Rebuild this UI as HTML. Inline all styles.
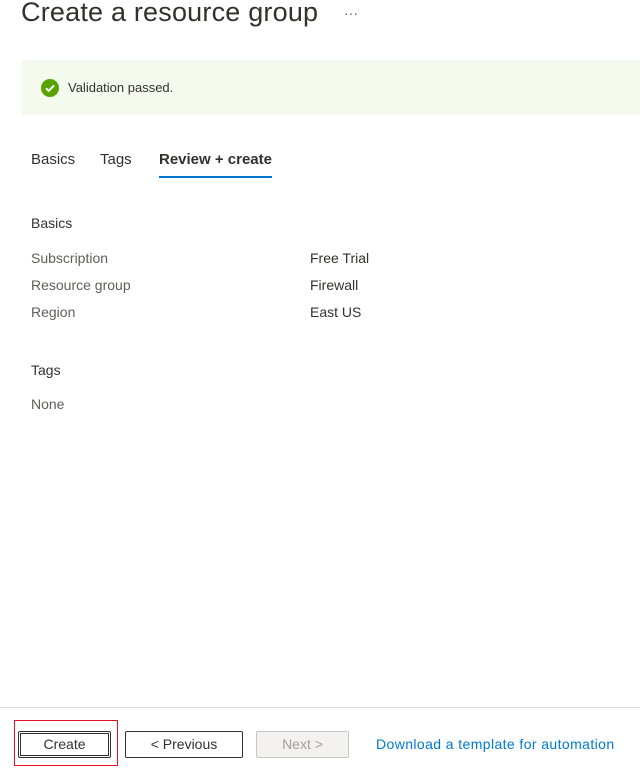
<!DOCTYPE html>
<html><head><style>
body{margin:0;width:640px;height:768px;background:#fff;font-family:"Liberation Sans",sans-serif;color:#323130;position:relative;overflow:hidden}
.a{position:absolute;white-space:nowrap}
.t{font-size:14px}
.g{color:#605e5c}
.btn{position:absolute;box-sizing:border-box;height:27px;border:1px solid #323130;border-radius:2px;font-size:14px;text-align:center;line-height:25px;background:#fff}
</style></head><body>
<div class="a" style="left:21px;top:-3px;font-size:27px;letter-spacing:0.2px;color:#323130">Create a resource group</div>
<div class="a" style="left:344px;top:5px;font-size:14px;color:#605e5c">···</div>
<div class="a" style="left:22px;top:60px;width:618px;height:55px;background:#f4fbee"></div>
<svg class="a" style="left:41px;top:79px" width="18" height="18" viewBox="0 0 18 18"><circle cx="9" cy="9" r="9" fill="#57a300"/><path d="M5 9.3l2.7 2.6L13 6.5" stroke="#fff" stroke-width="2" fill="none"/></svg>
<div class="a t" style="left:68px;top:80px;font-size:13px">Validation passed.</div>
<div class="a" style="left:31px;top:151px;font-size:15px">Basics</div>
<div class="a" style="left:100px;top:151px;font-size:15px">Tags</div>
<div class="a" style="left:159px;top:151px;font-size:15px;font-weight:600">Review + create</div>
<div class="a" style="left:159px;top:176px;width:113px;height:2px;background:#0078d4"></div>
<div class="a t" style="left:31px;top:215px">Basics</div>
<div class="a t g" style="left:31px;top:250px">Subscription</div>
<div class="a t g" style="left:31px;top:277px">Resource group</div>
<div class="a t g" style="left:31px;top:304px">Region</div>
<div class="a t" style="left:310px;top:250px">Free Trial</div>
<div class="a t" style="left:310px;top:277px">Firewall</div>
<div class="a t" style="left:310px;top:304px">East US</div>
<div class="a t" style="left:31px;top:362px">Tags</div>
<div class="a t g" style="left:31px;top:396px">None</div>
<div class="a" style="left:0;top:707px;width:640px;height:1px;background:#e1dfdd"></div>
<div class="a" style="left:14px;top:720px;width:104px;height:46px;box-sizing:border-box;border:1px solid #e81123"></div>
<div class="btn" style="left:18px;top:731px;width:93px;outline:1px solid #323130;outline-offset:-3px">Create</div>
<div class="btn" style="left:125px;top:731px;width:118px">&lt; Previous</div>
<div class="btn" style="left:256px;top:731px;width:93px;border-color:#c8c6c4;background:#f3f2f1;color:#a19f9d">Next &gt;</div>
<div class="a t" style="left:376px;top:736px;color:#0078d4;letter-spacing:0.4px">Download a template for automation</div>
</body></html>
